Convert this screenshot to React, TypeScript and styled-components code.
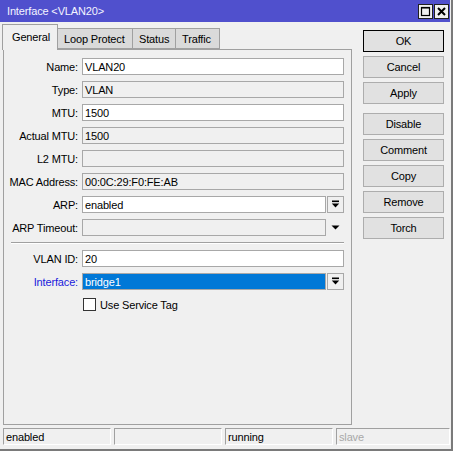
import React from 'react'
import styled, { createGlobalStyle } from 'styled-components'

const GlobalStyle = createGlobalStyle`
  html, body {
    margin: 0;
    padding: 0;
    background: #f0f0f0;
  }
  * {
    box-sizing: border-box;
  }
`

const Window = styled.div`
  width: 453px;
  height: 451px;
  display: flex;
  flex-direction: column;
  background: #f0f0f0;
  border-right: 2px solid #7a7a7a;
  border-bottom: 2px solid #7a7a7a;
  font-family: "Liberation Sans", Arial, sans-serif;
  font-size: 11px;
  letter-spacing: -0.15px;
  color: #000;
`

const TitleBar = styled.div`
  height: 22px;
  margin-right: 1px;
  background: #5050cd;
  color: #f4f4ff;
  display: flex;
  align-items: center;
  justify-content: space-between;
  padding: 0 1px 0 7px;
  font-size: 11px;
`

const TitleButtons = styled.div`
  display: flex;
  gap: 1px;
`

const TitleButton = styled.div`
  width: 15px;
  height: 15px;
  background: #f0f0f0;
  border: 1px solid #202020;
  display: flex;
  align-items: center;
  justify-content: center;
`

const Main = styled.div`
  display: flex;
  padding-top: 2px;
`

const LeftColumn = styled.div`
  margin-left: 2px;
  width: 350px;
  display: flex;
  flex-direction: column;
`

const Tabs = styled.div`
  display: flex;
  align-items: flex-end;
  height: 25px;
  position: relative;
  z-index: 1;
`

const Tab = styled.div<{ $active?: boolean; $width: number }>`
  width: ${p => p.$width}px;
  height: ${p => (p.$active ? 26 : 21)}px;
  margin-bottom: ${p => (p.$active ? -1 : 0)}px;
  background: ${p => (p.$active ? '#f0f0f0' : '#dadada')};
  border: 1px solid #a0a0a0;
  border-bottom: ${p => (p.$active ? 'none' : '1px solid #a0a0a0')};
  border-left: ${p => (p.$active ? '1px solid #a0a0a0' : 'none')};
  display: flex;
  align-items: center;
  padding-left: ${p => (p.$active ? 9 : 6)}px;
  padding-bottom: ${p => (p.$active ? 1 : 0)}px;
  font-size: 11px;
`

const Panel = styled.div`
  margin-left: 1px;
  width: 349px;
  height: 376px;
  border: 1px solid #a0a0a0;
  padding: 8px 7px 0 0;
  display: flex;
  flex-direction: column;
  gap: 6px;
`

const Row = styled.div`
  display: grid;
  grid-template-columns: 74px 1fr;
  column-gap: 4px;
  height: 17px;
  align-items: center;
`

const Label = styled.div<{ $link?: boolean }>`
  text-align: right;
  white-space: nowrap;
  color: ${p => (p.$link ? '#1a1adc' : '#000')};
`

const Field = styled.div<{ $editable?: boolean; $selected?: boolean }>`
  height: 17px;
  border: 1px solid #a8a8a8;
  background: ${p => (p.$selected ? '#0078d7' : p.$editable ? '#fff' : '#f0f0f0')};
  color: ${p => (p.$selected ? '#fff' : '#000')};
  padding-left: 2px;
  display: flex;
  align-items: center;
  white-space: nowrap;
  overflow: hidden;
`

const FieldWithButton = styled.div`
  display: grid;
  grid-template-columns: 1fr 17px;
  column-gap: 1px;
`

const DropButton = styled.div`
  height: 17px;
  border: 1px solid #a8a8a8;
  background: #f0f0f0;
  display: flex;
  align-items: center;
  justify-content: center;
`

const PlainArrow = styled.div`
  display: flex;
  align-items: center;
  justify-content: center;
`

const Separator = styled.div`
  margin: 0 0 0 7px;
  height: 2px;
  border-top: 1px solid #a0a0a0;
  border-bottom: 1px solid #fff;
`

const CheckRow = styled.label`
  display: flex;
  align-items: center;
  gap: 4px;
  height: 17px;
  margin-left: 79px;
`

const CheckBox = styled.span`
  width: 13px;
  height: 13px;
  background: #fff;
  border: 1px solid #333;
`

const RightColumn = styled.div`
  margin-left: 11px;
  padding-top: 6px;
  display: flex;
  flex-direction: column;
  gap: 4px;
`

const Button = styled.div<{ $default?: boolean; $spaced?: boolean }>`
  width: 81px;
  height: 22px;
  background: #e1e1e1;
  border: 1px solid ${p => (p.$default ? '#000' : '#adadad')};
  display: flex;
  align-items: center;
  justify-content: center;
  margin-top: ${p => (p.$spaced ? 5 : 0)}px;
  font-size: 11px;
`

const StatusBar = styled.div`
  display: flex;
  gap: 3px;
  margin: 3px 1px 0 3px;
  height: 17px;
`

const StatusField = styled.div<{ $muted?: boolean; $grow?: boolean }>`
  width: 108px;
  flex: ${p => (p.$grow ? 1 : 'none')};
  border: 1px solid;
  border-color: #a0a0a0 #fff #fff #a0a0a0;
  padding-left: 2px;
  display: flex;
  align-items: center;
  color: ${p => (p.$muted ? '#a8a8a8' : '#000')};
`

const DropIcon = () => (
  <svg width="9" height="9" viewBox="0 0 9 9">
    <rect x="1" y="0.5" width="7" height="1.6" fill="#000" />
    <polygon points="0.8,3.4 8.2,3.4 4.5,7.6" fill="#000" />
  </svg>
)

const ArrowIcon = () => (
  <svg width="9" height="5" viewBox="0 0 9 5">
    <polygon points="0.5,0.5 8.5,0.5 4.5,4.6" fill="#000" />
  </svg>
)

const MaxIcon = () => (
  <svg width="11" height="11" viewBox="0 0 11 11">
    <rect x="1.5" y="1.5" width="8" height="8" fill="none" stroke="#000" strokeWidth="1.2" />
    <rect x="1" y="1" width="9" height="1.5" fill="#000" />
  </svg>
)

const CloseIcon = () => (
  <svg width="11" height="11" viewBox="0 0 11 11">
    <path d="M2 2 L9 9 M9 2 L2 9" stroke="#000" strokeWidth="2" />
  </svg>
)

const fields = [
  { label: 'Name:', value: 'VLAN20', editable: true },
  { label: 'Type:', value: 'VLAN' },
  { label: 'MTU:', value: '1500', editable: true },
  { label: 'Actual MTU:', value: '1500' },
  { label: 'L2 MTU:', value: '' },
  { label: 'MAC Address:', value: '00:0C:29:F0:FE:AB' },
]

const buttons = ['OK', 'Cancel', 'Apply', 'Disable', 'Comment', 'Copy', 'Remove', 'Torch']

export default function App() {
  return (
    <>
      <GlobalStyle />
      <Window>
        <TitleBar>
          <span>Interface &lt;VLAN20&gt;</span>
          <TitleButtons>
            <TitleButton><MaxIcon /></TitleButton>
            <TitleButton><CloseIcon /></TitleButton>
          </TitleButtons>
        </TitleBar>
        <Main>
          <LeftColumn>
            <Tabs>
              <Tab $active $width={56}>General</Tab>
              <Tab $width={75}>Loop Protect</Tab>
              <Tab $width={43}>Status</Tab>
              <Tab $width={44}>Traffic</Tab>
            </Tabs>
            <Panel>
              {fields.map(f => (
                <Row key={f.label}>
                  <Label>{f.label}</Label>
                  <Field $editable={f.editable}>{f.value}</Field>
                </Row>
              ))}
              <Row>
                <Label>ARP:</Label>
                <FieldWithButton>
                  <Field $editable>enabled</Field>
                  <DropButton><DropIcon /></DropButton>
                </FieldWithButton>
              </Row>
              <Row>
                <Label>ARP Timeout:</Label>
                <FieldWithButton>
                  <Field />
                  <PlainArrow><ArrowIcon /></PlainArrow>
                </FieldWithButton>
              </Row>
              <Separator />
              <Row>
                <Label>VLAN ID:</Label>
                <Field $editable>20</Field>
              </Row>
              <Row>
                <Label $link>Interface:</Label>
                <FieldWithButton>
                  <Field $selected>bridge1</Field>
                  <DropButton><DropIcon /></DropButton>
                </FieldWithButton>
              </Row>
              <CheckRow>
                <CheckBox />
                <span>Use Service Tag</span>
              </CheckRow>
            </Panel>
          </LeftColumn>
          <RightColumn>
            {buttons.map(b => (
              <Button key={b} $default={b === 'OK'} $spaced={b === 'Disable'}>
                {b}
              </Button>
            ))}
          </RightColumn>
        </Main>
        <StatusBar>
          <StatusField>enabled</StatusField>
          <StatusField />
          <StatusField>running</StatusField>
          <StatusField $muted $grow>slave</StatusField>
        </StatusBar>
      </Window>
    </>
  )
}
